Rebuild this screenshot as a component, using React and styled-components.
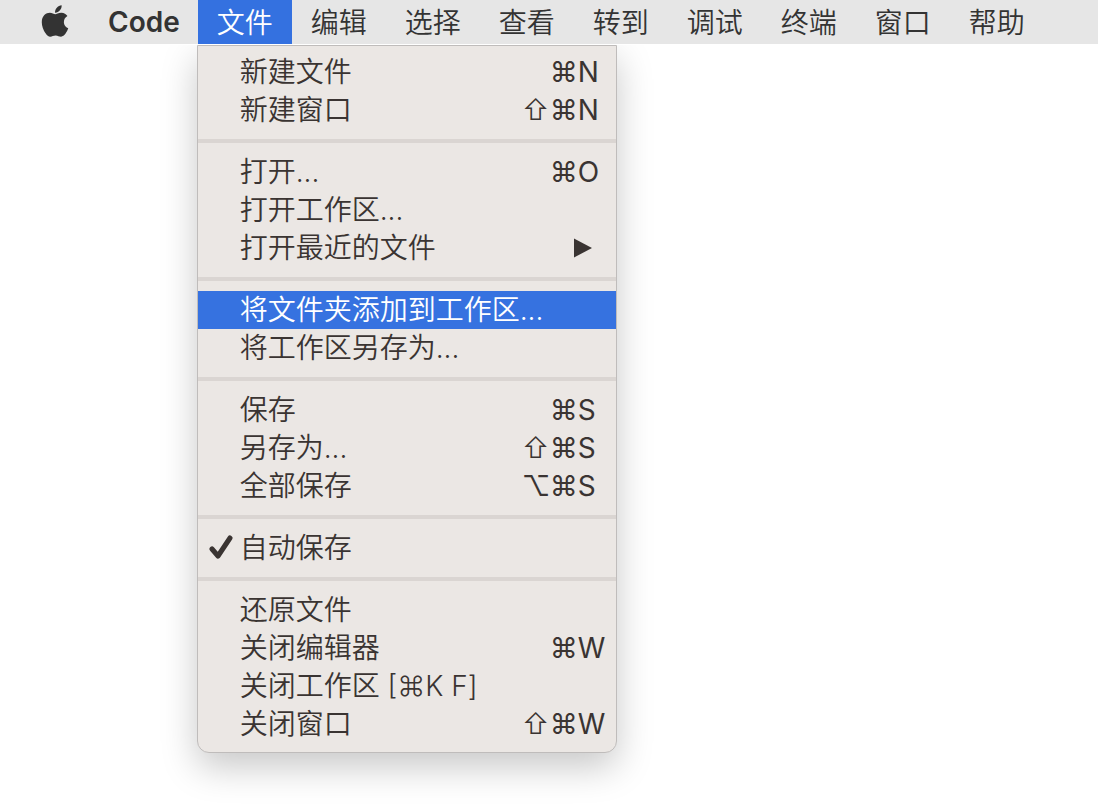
import React, { useState } from 'react'
import styled, { createGlobalStyle } from 'styled-components'
import { FaApple } from 'react-icons/fa'

const TITLES = ['文件', '编辑', '选择', '查看', '转到', '调试', '终端', '窗口', '帮助']

const GROUPS = [
  [
    { label: '新建文件', mods: ['⌘'], letter: 'N' },
    { label: '新建窗口', mods: ['⇧', '⌘'], letter: 'N' },
  ],
  [
    { label: '打开...', mods: ['⌘'], letter: 'O' },
    { label: '打开工作区...' },
    { label: '打开最近的文件', submenu: true },
  ],
  [
    { label: '将文件夹添加到工作区...', active: true },
    { label: '将工作区另存为...' },
  ],
  [
    { label: '保存', mods: ['⌘'], letter: 'S' },
    { label: '另存为...', mods: ['⇧', '⌘'], letter: 'S' },
    { label: '全部保存', mods: ['⌥', '⌘'], letter: 'S' },
  ],
  [
    { label: '自动保存', toggle: true },
  ],
  [
    { label: '还原文件' },
    { label: '关闭编辑器', mods: ['⌘'], letter: 'W' },
    { label: '关闭工作区 [⌘K F]' },
    { label: '关闭窗口', mods: ['⇧', '⌘'], letter: 'W' },
  ],
]

function Tick() {
  return (
    <TickIcon viewBox="0 0 28 28" aria-hidden="true">
      <path d="M7 15L13 22L25 4" />
    </TickIcon>
  )
}

function ToggleItem({ item }) {
  const [checked, setChecked] = useState(true)
  return (
    <ToggleRow>
      <HiddenCheckbox checked={checked} onChange={() => setChecked(!checked)} />
      <Gutter>{checked && <Tick />}</Gutter>
      <Label>{item.label}</Label>
    </ToggleRow>
  )
}

function Item({ item }) {
  if (item.toggle) return <ToggleItem item={item} />
  return (
    <Row type="button" $active={item.active}>
      <Gutter />
      <Label>{item.label}</Label>
      {item.mods && (
        <Shortcut>
          {item.mods.map((mod) => (
            <Modifier key={mod} $thin={mod === '⇧'}>{mod}</Modifier>
          ))}
          <Letter>{item.letter}</Letter>
        </Shortcut>
      )}
      {item.submenu && (
        <Arrow viewBox="0 0 18 20" aria-hidden="true">
          <path d="M0 0.5L18 10L0 19.5Z" />
        </Arrow>
      )}
    </Row>
  )
}

function FileMenu() {
  return (
    <Menu>
      {GROUPS.map((group, i) => (
        <Group key={i}>
          {group.map((item) => (
            <Item key={item.label} item={item} />
          ))}
        </Group>
      ))}
    </Menu>
  )
}

function App() {
  return (
    <Desktop>
      <GlobalStyle />
      <MenuBar>
        <AppleButton type="button" aria-label="Apple">
          <FaApple size={36} />
        </AppleButton>
        <AppName type="button">Code</AppName>
        {TITLES.map((title, i) => (
          <TitleSlot key={title}>
            <Title type="button" $open={i === 0}>{title}</Title>
            {i === 0 && <FileMenu />}
          </TitleSlot>
        ))}
      </MenuBar>
    </Desktop>
  )
}

export default App


const GlobalStyle = createGlobalStyle`
  body {
    margin: 0;
    background-color: #ffffff;
    color: #3a3432;
    font-family: Inter, "Noto Sans CJK SC", sans-serif;
    font-size: 28px;
  }
`

const Desktop = styled.div`
  min-height: 100vh;
`

const MenuBar = styled.nav`
  display: flex;
  height: 44px;
  padding-left: 18px;
  background-color: #e6e6e6;
`

const TitleSlot = styled.div`
  position: relative;
  display: flex;
`

const Title = styled.button`
  display: flex;
  align-items: center;
  padding: 2px 19px 0;
  border: 0;
  background-color: ${(props) => (props.$open ? '#3471e0' : 'transparent')};
  color: ${(props) => (props.$open ? '#ffffff' : '#333333')};
  font: inherit;
  font-weight: 350;
  line-height: 42px;
  white-space: nowrap;
`

const AppleButton = styled(Title)`
  padding: 0 16px 2px 19px;
`

const AppName = styled(Title)`
  padding: 0 18px 0 19px;
  font-weight: 600;
`

const Menu = styled.div`
  position: absolute;
  top: 45px;
  left: -1px;
  z-index: 1;
  box-sizing: border-box;
  width: max-content;
  min-width: 420px;
  padding: 7px 0 9px;
  border: 1px solid #bfbcbb;
  border-radius: 0 0 12px 12px;
  background-color: #ebe7e4;
  box-shadow: 0 14px 36px rgba(0, 0, 0, 0.22);
  clip-path: inset(0 -60px -80px -60px);
`

const Group = styled.div`
  display: flex;
  flex-direction: column;

  & + & {
    margin-top: 10px;
    padding-top: 10px;
    border-top: 4px solid #dad5d2;
  }
`

const Row = styled.button`
  display: flex;
  align-items: center;
  height: 38px;
  padding: 0;
  border: 0;
  background-color: ${(props) => (props.$active ? '#3672e0' : 'transparent')};
  color: ${(props) => (props.$active ? '#ffffff' : 'inherit')};
  font: inherit;
  font-weight: 350;
  line-height: 38px;
  text-align: left;
  white-space: nowrap;
`

const ToggleRow = styled(Row).attrs({ as: 'label' })``

const HiddenCheckbox = styled.input.attrs({ type: 'checkbox' })`
  position: absolute;
  margin: 0;
  opacity: 0;
`

const Gutter = styled.span`
  display: flex;
  justify-content: center;
  width: 42px;
`

const Label = styled.span`
  flex: 1;
`

const Shortcut = styled.span`
  display: flex;
  font-weight: 400;
`

const Modifier = styled.span`
  width: 28px;
  font-weight: ${(props) => (props.$thin ? 300 : 400)};
  text-align: center;
`

const Letter = styled.span`
  width: 38px;
`

const TickIcon = styled.svg`
  width: 28px;
  height: 28px;
  fill: none;
  stroke: currentColor;
  stroke-width: 5;
  stroke-linecap: round;
  stroke-linejoin: round;
`

const Arrow = styled.svg`
  width: 18px;
  height: 20px;
  margin-right: 24px;
  fill: currentColor;
`
